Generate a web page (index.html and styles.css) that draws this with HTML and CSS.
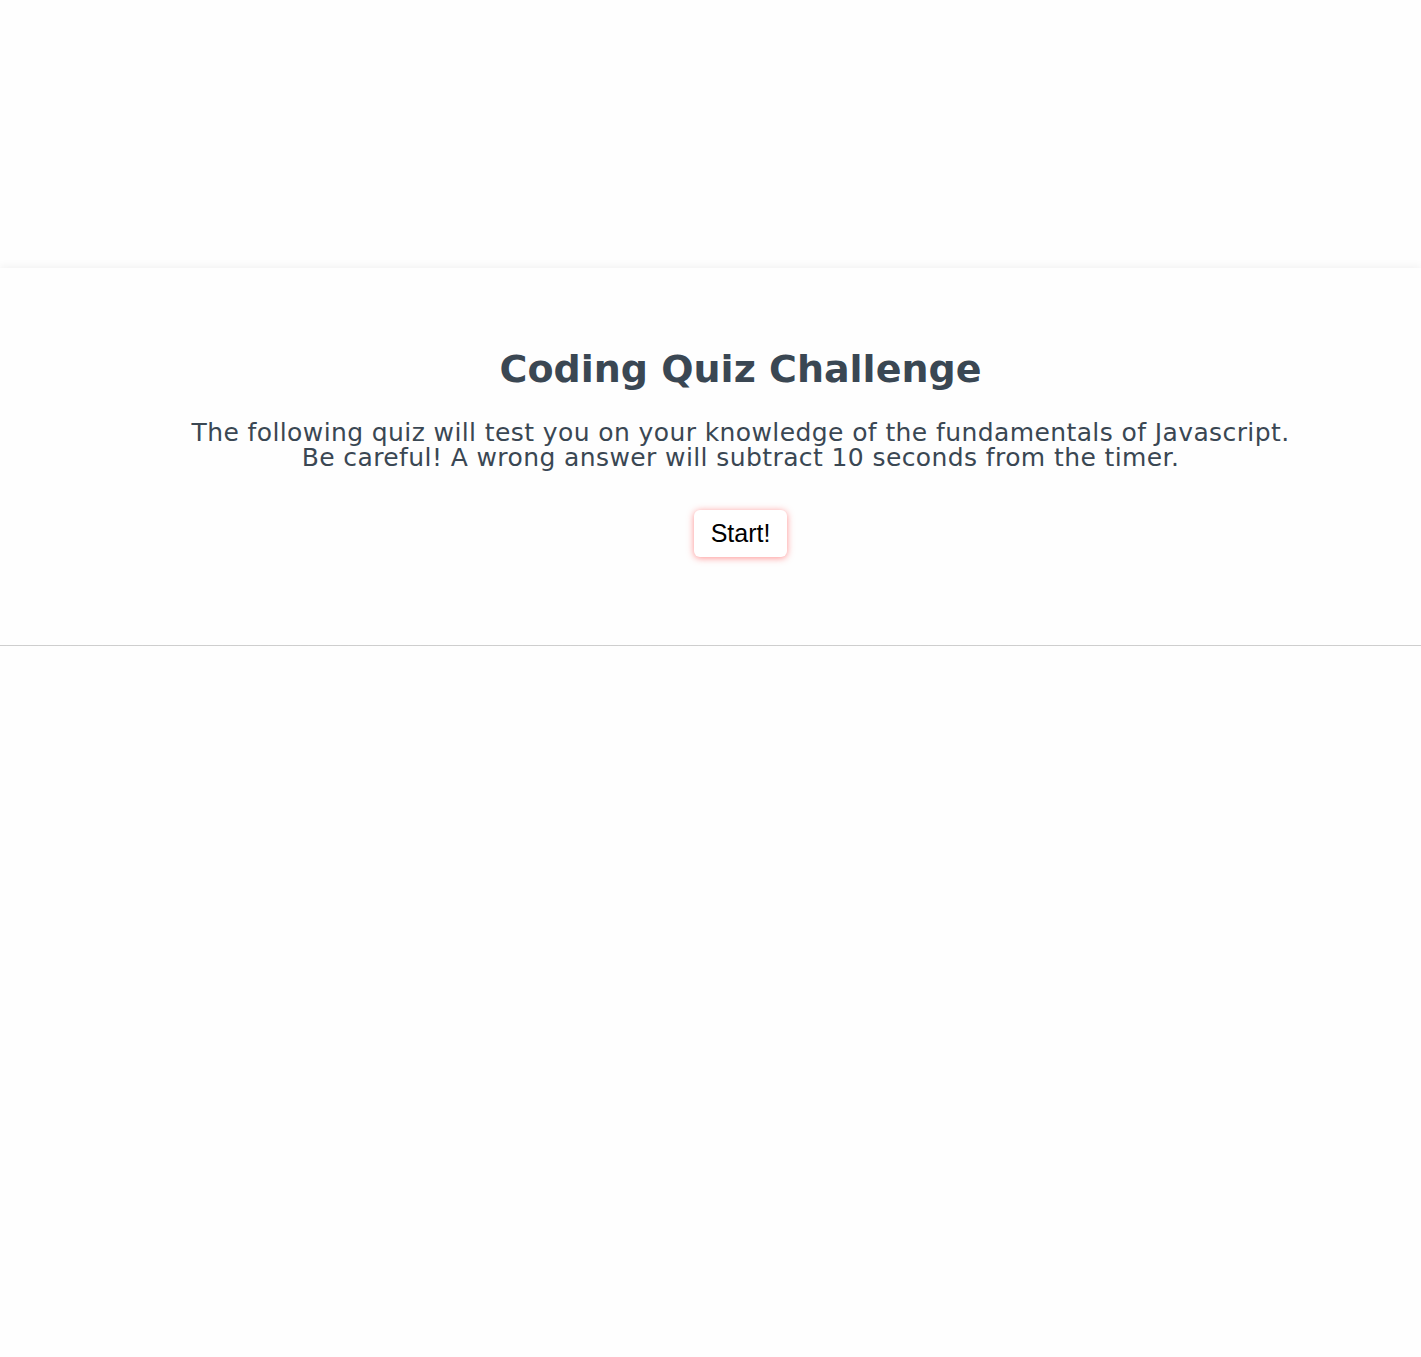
FILE: index.html
```html
<!DOCTYPE html>
<html lang="en">
<head>
<meta charset="utf-8">
<title>Coding Quiz Challenge</title>
<link rel="stylesheet" href="styles.css">
</head>
<body>
<main class="card">
  <h1 class="title">Coding Quiz Challenge</h1>
  <p class="intro">The following quiz will test you on your knowledge of the fundamentals of Javascript.<br>Be careful! A wrong answer will subtract 10 seconds from the timer.</p>
  <button class="start">Start!</button>
</main>
</body>
</html>
```

FILE: styles.css
```css
html, body {
  margin: 0;
  padding: 0;
  background: #fefefe;
}
body {
  font-family: "DejaVu Sans", Verdana, sans-serif;
  color: #3a4753;
  padding-top: 268px;
}
.card {
  position: relative;
  background: #fefefe;
  border-bottom: 1px solid #e2e2e2;
  box-shadow: 0 -2px 8px rgba(0, 0, 0, 0.05);
  height: 378px;
  box-sizing: border-box;
  padding: 78px 0 0 60px;
  display: flex;
  flex-direction: column;
  align-items: center;
  text-align: center;
}
.card::after {
  content: "";
  position: absolute;
  left: 0;
  right: 0;
  top: 100%;
  height: 22px;
  background: linear-gradient(rgba(0, 0, 0, 0.09), rgba(0, 0, 0, 0.03) 45%, rgba(0, 0, 0, 0));
}
.title {
  font-size: 38px;
  font-weight: bold;
  margin: 0;
  line-height: 46px;
}
.intro {
  font-size: 25px;
  letter-spacing: 0.4px;
  line-height: 25px;
  margin: 28px 0 0;
}
.start {
  margin-top: 40px;
  font-family: "Liberation Sans", Arial, sans-serif;
  font-size: 25px;
  color: #000;
  background: #fff;
  border: none;
  border-radius: 6px;
  padding: 0 17px;
  height: 47px;
  box-shadow: 0 1px 7px rgba(255, 70, 70, 0.6);
}
```
